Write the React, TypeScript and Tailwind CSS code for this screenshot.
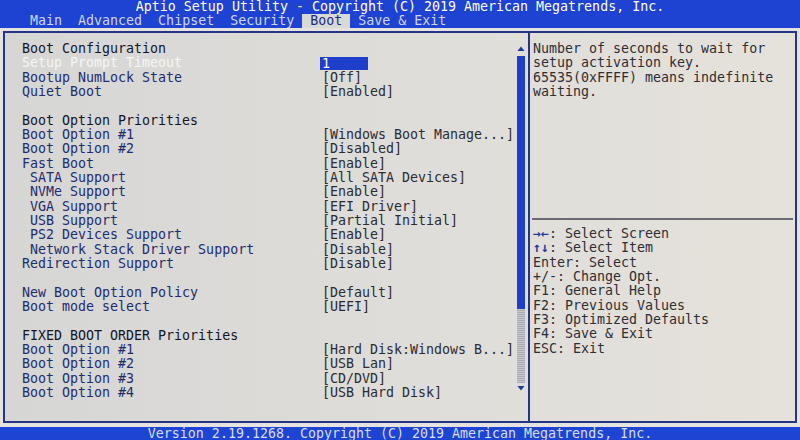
const tabs = ['Main', 'Advanced', 'Chipset', 'Security', 'Boot', 'Save & Exit'];

type Row = {
    kind: 'head' | 'item' | 'sub' | 'blank' | 'active';
    label?: string;
    value?: string;
};

const rows: Row[] = [
    { kind: 'head', label: 'Boot Configuration' },
    { kind: 'active', label: 'Setup Prompt Timeout', value: '1' },
    { kind: 'item', label: 'Bootup NumLock State', value: '[Off]' },
    { kind: 'item', label: 'Quiet Boot', value: '[Enabled]' },
    { kind: 'blank' },
    { kind: 'head', label: 'Boot Option Priorities' },
    { kind: 'item', label: 'Boot Option #1', value: '[Windows Boot Manage...]' },
    { kind: 'item', label: 'Boot Option #2', value: '[Disabled]' },
    { kind: 'item', label: 'Fast Boot', value: '[Enable]' },
    { kind: 'sub', label: 'SATA Support', value: '[All SATA Devices]' },
    { kind: 'sub', label: 'NVMe Support', value: '[Enable]' },
    { kind: 'sub', label: 'VGA Support', value: '[EFI Driver]' },
    { kind: 'sub', label: 'USB Support', value: '[Partial Initial]' },
    { kind: 'sub', label: 'PS2 Devices Support', value: '[Enable]' },
    { kind: 'sub', label: 'Network Stack Driver Support', value: '[Disable]' },
    { kind: 'item', label: 'Redirection Support', value: '[Disable]' },
    { kind: 'blank' },
    { kind: 'item', label: 'New Boot Option Policy', value: '[Default]' },
    { kind: 'item', label: 'Boot mode select', value: '[UEFI]' },
    { kind: 'blank' },
    { kind: 'head', label: 'FIXED BOOT ORDER Priorities' },
    { kind: 'item', label: 'Boot Option #1', value: '[Hard Disk:Windows B...]' },
    { kind: 'item', label: 'Boot Option #2', value: '[USB Lan]' },
    { kind: 'item', label: 'Boot Option #3', value: '[CD/DVD]' },
    { kind: 'item', label: 'Boot Option #4', value: '[USB Hard Disk]' },
];

const keys: { key: string; text: string; arrow?: boolean }[] = [
    { key: '→←', text: ': Select Screen', arrow: true },
    { key: '↑↓', text: ': Select Item', arrow: true },
    { key: 'Enter', text: ': Select' },
    { key: '+/-', text: ': Change Opt.' },
    { key: 'F1', text: ': General Help' },
    { key: 'F2', text: ': Previous Values' },
    { key: 'F3', text: ': Optimized Defaults' },
    { key: 'F4', text: ': Save & Exit' },
    { key: 'ESC', text: ': Exit' },
];

function SetupRow({ row }: { row: Row }) {
    if (row.kind === 'blank') return <div className="h-[14.33px]" />;

    const labelColor =
        row.kind === 'head' ? 'text-[#15151f]' : row.kind === 'active' ? 'text-[#f6f6f4]' : 'text-[#1f2c6e]';

    return (
        <div className="flex h-[14.33px] items-center whitespace-pre">
            <span className={`w-[300px] ${labelColor}`}>
                {row.kind === 'sub' ? ' ' + row.label : row.label}
            </span>
            {row.kind === 'active' ? (
                <span className="-ml-[2px] h-[13px] w-[48px] bg-[#1d3fcc] pl-[2px] leading-[13px] text-white">
                    {row.value}
                </span>
            ) : (
                <span className="text-[#2c2c30]">{row.value}</span>
            )}
        </div>
    );
}

export default function App() {
    return (
        <div className="flex h-[440px] w-[800px] flex-col overflow-hidden bg-[#e4e3df] font-['DejaVu_Sans_Mono','Liberation_Mono',monospace] text-[13.3px] leading-[14.33px]">
            {/* Title + tab bar */}
            <header className="h-[28px] bg-[#1e42d2]">
                <div className="h-[14px] text-center leading-[14px] text-white">
                    Aptio Setup Utility - Copyright (C) 2019 American Megatrends, Inc.
                </div>
                <div className="flex h-[14px] whitespace-pre pl-[22px] leading-[14px]">
                    {tabs.map((t) => (
                        <span
                            key={t}
                            className={t === 'Boot' ? 'bg-[#d8d9d6] text-[#1c2c80]' : 'text-[#cdd5f2]'}
                        >
                            {' ' + t + ' '}
                        </span>
                    ))}
                </div>
            </header>

            {/* Main frame */}
            <div className="mx-[3px] mt-[3px] flex h-[392px] border-2 border-[#233584] bg-gradient-to-r from-[#d6d6d5] via-[#dfddd9] to-[#e5e2db]">
                {/* Settings list */}
                <section className="flex w-[525px] border-r-2 border-[#233584]">
                    <div className="flex-1 pl-[17px] pt-[9px]">
                        {rows.map((r, i) => (
                            <SetupRow key={i} row={r} />
                        ))}
                    </div>
                    <div className="mr-[3px] flex w-[8px] flex-col items-center pt-[13px]">
                        <svg width="8" height="6" viewBox="0 0 8 6">
                            <path d="M4 0.5 L7.5 5 L0.5 5 Z" fill="#1d3a9e" />
                        </svg>
                        <div className="mt-[4px] h-[253px] w-[8px] bg-[#1d3fcc]" />
                        <div className="h-[74px] w-[8px] bg-[repeating-linear-gradient(0deg,#a9a9b2_0px,#a9a9b2_1px,#c9c9cc_1px,#c9c9cc_2px)]" />
                        <svg className="mt-[2px]" width="8" height="6" viewBox="0 0 8 6">
                            <path d="M0.5 1 L7.5 1 L4 5.5 Z" fill="#1d3a9e" />
                        </svg>
                    </div>
                </section>

                {/* Help panel */}
                <aside className="flex flex-1 flex-col pr-[2px] text-[#2e2e36]">
                    <div className="h-[185px] whitespace-pre pl-[3px] pt-[9px]">
                        <div>Number of seconds to wait for</div>
                        <div>setup activation key.</div>
                        <div>65535(0xFFFF) means indefinite</div>
                        <div>waiting.</div>
                    </div>
                    <div className="ml-[2px] h-[2px] bg-[#6a6a74]" />
                    <div className="whitespace-pre pl-[3px] pt-[7px]">
                        {keys.map((k) => (
                            <div key={k.key}>
                                <span className={k.arrow ? 'font-bold text-[#1f3a9a]' : ''}>{k.key}</span>
                                {k.text}
                            </div>
                        ))}
                    </div>
                </aside>
            </div>

            {/* Footer */}
            <footer className="mt-[4px] h-[13px] bg-[#1e44d4] text-center leading-[13px] text-[#d7def5]">
                Version 2.19.1268. Copyright (C) 2019 American Megatrends, Inc.
            </footer>
        </div>
    );
}
